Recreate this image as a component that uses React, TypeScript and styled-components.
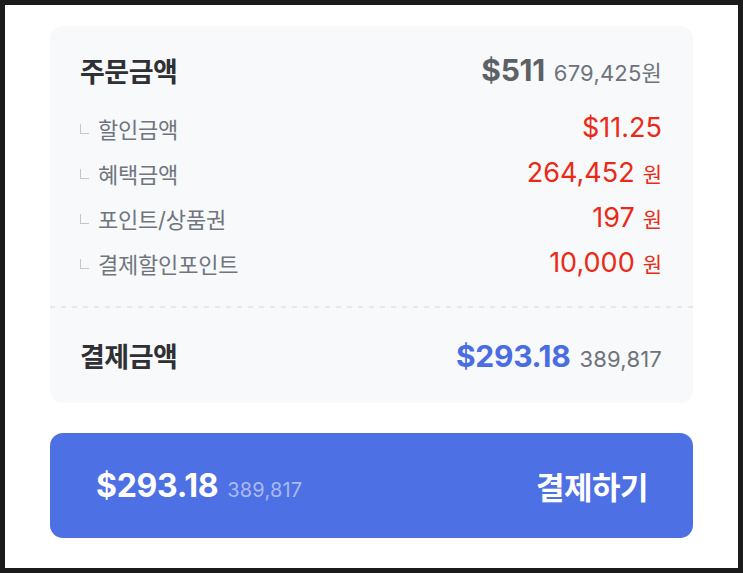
import styled, { createGlobalStyle } from "styled-components";

const GlobalStyle = createGlobalStyle`
  html, body {
    margin: 0;
    padding: 0;
    background: #1b1b1b;
  }
  body {
    font-family: Inter, "Noto Sans CJK KR", "Noto Sans", sans-serif;
  }
`;

const Page = styled.div`
  box-sizing: border-box;
  margin: 5px;
  width: 733px;
  height: 563px;
  background: #ffffff;
  padding: 21px 45px 0;
  display: flex;
  flex-direction: column;
  gap: 30px;
`;

const Card = styled.div`
  background: #f8f9fb;
  border-radius: 13px;
  display: flex;
  flex-direction: column;
`;

const Top = styled.div`
  padding: 28px 31px 21px 30px;
`;

const Row = styled.div<{ $h: number }>`
  display: flex;
  align-items: center;
  justify-content: space-between;
  height: ${(p) => p.$h}px;
`;

const Title = styled.span`
  font-size: 27px;
  font-weight: 700;
  color: #2e3033;
  letter-spacing: -0.5px;
`;

const Amount = styled.span`
  display: flex;
  align-items: baseline;
  gap: 9px;
`;

const Dollar = styled.span<{ $color: string; $size: number }>`
  font-size: ${(p) => p.$size}px;
  font-weight: 700;
  color: ${(p) => p.$color};
  letter-spacing: -0.3px;
`;

const Won = styled.span<{ $color: string; $size?: number }>`
  font-size: ${(p) => p.$size ?? 22}px;
  font-weight: 400;
  color: ${(p) => p.$color};
  letter-spacing: 0.2px;
`;

const List = styled.div`
  margin-top: 19px;
`;

const Label = styled.span`
  display: flex;
  align-items: center;
  gap: 9px;
  font-size: 22px;
  color: #70757d;
  letter-spacing: -0.2px;
`;

const Corner = styled.span`
  display: inline-block;
  width: 8px;
  height: 9px;
  margin-top: 2px;
  border-left: 1.5px solid #c3c7cd;
  border-bottom: 1.5px solid #c3c7cd;
`;

const Red = styled.span`
  display: flex;
  align-items: baseline;
  gap: 8px;
  color: #ea2a16;
`;

const RedNum = styled.span`
  font-size: 27px;
  font-weight: 400;
`;

const RedUnit = styled.span`
  font-size: 21px;
`;

const Dashed = styled.div`
  height: 2px;
  background: repeating-linear-gradient(90deg, #e6e8eb 0 5px, transparent 5px 11px);
`;

const Bottom = styled.div`
  height: 95px;
  padding: 0 31px 0 30px;
  display: flex;
  align-items: center;
  justify-content: space-between;
`;

const PayButton = styled.button`
  height: 105px;
  border: none;
  border-radius: 13px;
  background: #4e70e5;
  padding: 0 45px 0 46px;
  display: flex;
  align-items: center;
  justify-content: space-between;
  font-family: inherit;
  cursor: pointer;
`;

const ButtonLabel = styled.span`
  font-size: 31px;
  font-weight: 700;
  color: #ffffff;
  letter-spacing: -0.5px;
`;

const discounts = [
  { label: "할인금액", value: "$11.25", unit: "" },
  { label: "혜택금액", value: "264,452", unit: "원" },
  { label: "포인트/상품권", value: "197", unit: "원" },
  { label: "결제할인포인트", value: "10,000", unit: "원" },
];

export default function App() {
  return (
    <>
      <GlobalStyle />
      <Page>
        <Card>
          <Top>
            <Row $h={32}>
              <Title>주문금액</Title>
              <Amount>
                <Dollar $color="#5c6166" $size={30}>$511</Dollar>
                <Won $color="#6e737b">679,425원</Won>
              </Amount>
            </Row>
            <List>
              {discounts.map((d) => (
                <Row $h={45} key={d.label}>
                  <Label>
                    <Corner />
                    {d.label}
                  </Label>
                  <Red>
                    <RedNum>{d.value}</RedNum>
                    {d.unit && <RedUnit>{d.unit}</RedUnit>}
                  </Red>
                </Row>
              ))}
            </List>
          </Top>
          <Dashed />
          <Bottom>
            <Title>결제금액</Title>
            <Amount>
              <Dollar $color="#4a6de3" $size={30}>$293.18</Dollar>
              <Won $color="#6e737b">389,817</Won>
            </Amount>
          </Bottom>
        </Card>
        <PayButton>
          <Amount>
            <Dollar $color="#ffffff" $size={32}>$293.18</Dollar>
            <Won $color="#a9b9f2" $size={20}>389,817</Won>
          </Amount>
          <ButtonLabel>결제하기</ButtonLabel>
        </PayButton>
      </Page>
    </>
  );
}
